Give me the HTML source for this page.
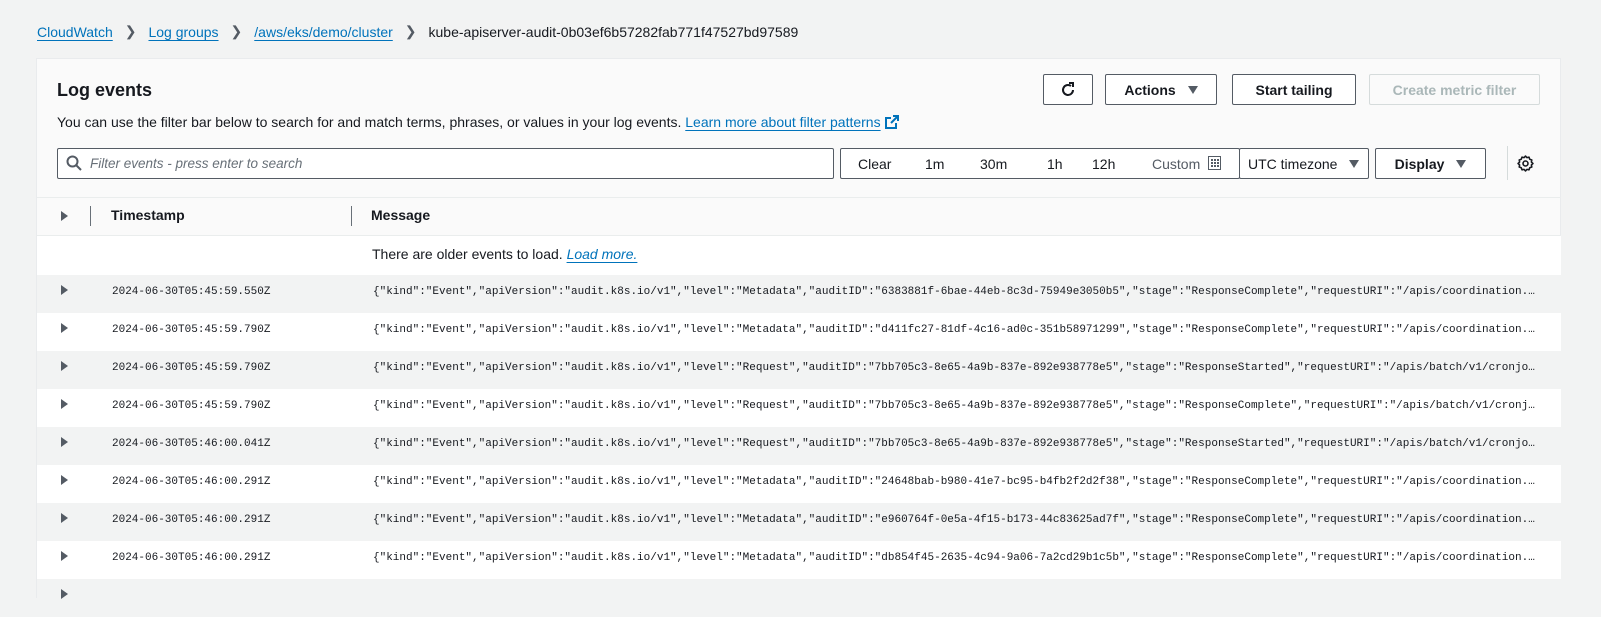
<!DOCTYPE html>
<html><head><meta charset="utf-8"><style>
*{box-sizing:border-box;margin:0;padding:0}
body{width:1601px;height:591px;overflow:hidden;background:#f2f3f3;font-family:"Liberation Sans",sans-serif;color:#16191f;position:relative;font-size:14px}
.a{position:absolute}
.lnk{color:#0073bb;text-decoration:underline;text-underline-offset:3px}
.bc{top:23px;left:37px;font-size:14px;white-space:nowrap;display:flex;align-items:center}
.bc .sep{margin:0 12px;color:#545b64}
.panel{left:36px;top:58px;width:1525px;height:540px;background:#fafafa;border:1px solid #e9ebed}
.btn{position:absolute;top:74px;height:31px;border:1px solid #545b64;border-radius:2px;background:#fff;font-weight:bold;font-size:14px;display:flex;align-items:center;justify-content:center;color:#16191f}
.tri{display:inline-block;width:0;height:0;border-left:5px solid transparent;border-right:5px solid transparent;border-top:8px solid #545b64;margin-left:12px}
.row{position:absolute;left:37px;width:1524px;height:38px}
.ts{position:absolute;left:75px;top:11px;font-family:"Liberation Mono",monospace;font-size:11px}
.msg{position:absolute;left:336px;top:11px;width:1163px;font-family:"Liberation Mono",monospace;font-size:11px;white-space:nowrap;overflow:hidden;text-overflow:ellipsis}
.ex{position:absolute;left:24px;top:10px;width:0;height:0;border-top:5px solid transparent;border-bottom:5px solid transparent;border-left:7px solid #545b64}
</style></head><body>
<div class="a bc"><span class="lnk">CloudWatch</span><span class="sep">&#x276F;</span><span class="lnk">Log groups</span><span class="sep">&#x276F;</span><span class="lnk">/aws/eks/demo/cluster</span><span class="sep">&#x276F;</span><span>kube-apiserver-audit-0b03ef6b57282fab771f47527bd97589</span></div>
<div class="a panel"></div>
<div class="a" style="left:57px;top:80px;font-size:18px;font-weight:bold">Log events</div>
<div class="a" style="left:57px;top:114px;font-size:14px;white-space:nowrap">You can use the filter bar below to search for and match terms, phrases, or values in your log events. <span class="lnk">Learn more about filter patterns</span> <svg width="14" height="14" viewBox="0 0 14 14" style="vertical-align:-2px"><path d="M8 1h5v5M13 1L6 8M11 8v5H1V3h5" fill="none" stroke="#0073bb" stroke-width="2"/></svg></div>
<div class="btn" style="left:1043px;width:50px"><svg width="18" height="18" viewBox="0 0 18 18"><path d="M14 9a5 5 0 1 1-2-4" fill="none" stroke="#16191f" stroke-width="2"/><path d="M10 2h4v4" fill="none" stroke="#16191f" stroke-width="2"/></svg></div>
<div class="btn" style="left:1105px;width:112px">Actions<span class="tri"></span></div>
<div class="btn" style="left:1232px;width:124px">Start tailing</div>
<div class="btn" style="left:1369px;width:171px;border-color:#d5dbdb;color:#aab7b8;background:#fafafa">Create metric filter</div>
<div class="a" style="left:57px;top:148px;width:777px;height:31px;border:1px solid #545b64;border-radius:2px;background:#fff"></div>
<svg class="a" style="left:66px;top:155px" width="16" height="16" viewBox="0 0 16 16"><circle cx="6.5" cy="6.5" r="5" fill="none" stroke="#545b64" stroke-width="2"/><path d="M10 10l5 5" stroke="#545b64" stroke-width="2"/></svg>
<div class="a" style="left:90px;top:156px;font-style:italic;color:#687078;font-size:13.5px">Filter events - press enter to search</div>
<div class="a" style="left:840px;top:148px;width:400px;height:31px;border:1px solid #545b64;border-radius:2px;background:#fff"></div>
<div class="a" style="left:858px;top:156px">Clear</div>
<div class="a" style="left:925px;top:156px">1m</div>
<div class="a" style="left:980px;top:156px">30m</div>
<div class="a" style="left:1047px;top:156px">1h</div>
<div class="a" style="left:1092px;top:156px">12h</div>
<div class="a" style="left:1152px;top:156px;color:#545b64">Custom</div>
<svg class="a" style="left:1208px;top:156px" width="13" height="14" viewBox="0 0 13 14"><rect x="0.5" y="0.5" width="12" height="13" fill="none" stroke="#545b64"/><g fill="#545b64"><rect x="3" y="3" width="2" height="2"/><rect x="6" y="3" width="2" height="2"/><rect x="9" y="3" width="2" height="2"/><rect x="3" y="6" width="2" height="2"/><rect x="6" y="6" width="2" height="2"/><rect x="9" y="6" width="2" height="2"/><rect x="3" y="9" width="2" height="2"/><rect x="6" y="9" width="2" height="2"/><rect x="9" y="9" width="2" height="2"/></g></svg>
<div class="a" style="left:1239px;top:148px;width:130px;height:31px;border:1px solid #545b64;border-radius:2px;background:#fff;display:flex;align-items:center;padding-left:8px">UTC timezone<span class="tri"></span></div>
<div class="btn" style="left:1375px;top:148px;width:111px">Display<span class="tri"></span></div>
<div class="a" style="left:1507px;top:146px;width:1px;height:34px;background:#d5dbdb"></div>
<svg class="a" style="left:1517px;top:155px" width="17" height="17" viewBox="0 0 24 24"><path d="M12 1.5l2 2.2 3-.6 1 2.9 2.9 1-.6 3 2.2 2-2.2 2 .6 3-2.9 1-1 2.9-3-.6-2 2.2-2-2.2-3 .6-1-2.9-2.9-1 .6-3L1.5 12l2.2-2-.6-3 2.9-1 1-2.9 3 .6z" fill="none" stroke="#16191f" stroke-width="2.2" stroke-linejoin="round"/><circle cx="12" cy="12" r="3.5" fill="none" stroke="#16191f" stroke-width="2.2"/></svg>
<div class="a" style="left:37px;top:197px;width:1524px;height:1px;background:#eaeded"></div>
<div class="a" style="left:61px;top:211px;width:0;height:0;border-top:5px solid transparent;border-bottom:5px solid transparent;border-left:7px solid #545b64"></div>
<div class="a" style="left:90px;top:206px;width:1px;height:20px;background:#687078"></div>
<div class="a" style="left:111px;top:207px;font-weight:bold">Timestamp</div>
<div class="a" style="left:351px;top:206px;width:1px;height:20px;background:#687078"></div>
<div class="a" style="left:371px;top:207px;font-weight:bold">Message</div>
<div class="a" style="left:37px;top:235px;width:1524px;height:40px;background:#fff;border-top:1px solid #eaeded"></div>
<div class="a" style="left:372px;top:246px">There are older events to load. <span class="lnk" style="font-style:italic">Load more.</span></div>

<div class="row" style="top:275px;background:#f2f3f3"><span class="ex"></span><span class="ts">2024-06-30T05:45:59.550Z</span><span class="msg">{"kind":"Event","apiVersion":"audit.k8s.io/v1","level":"Metadata","auditID":"6383881f-6bae-44eb-8c3d-75949e3050b5","stage":"ResponseComplete","requestURI":"/apis/coordination.k8s.io/v1</span></div>
<div class="row" style="top:313px;background:#fff"><span class="ex"></span><span class="ts">2024-06-30T05:45:59.790Z</span><span class="msg">{"kind":"Event","apiVersion":"audit.k8s.io/v1","level":"Metadata","auditID":"d411fc27-81df-4c16-ad0c-351b58971299","stage":"ResponseComplete","requestURI":"/apis/coordination.k8s.io/v1</span></div>
<div class="row" style="top:351px;background:#f2f3f3"><span class="ex"></span><span class="ts">2024-06-30T05:45:59.790Z</span><span class="msg">{"kind":"Event","apiVersion":"audit.k8s.io/v1","level":"Request","auditID":"7bb705c3-8e65-4a9b-837e-892e938778e5","stage":"ResponseStarted","requestURI":"/apis/batch/v1/cronjobs</span></div>
<div class="row" style="top:389px;background:#fff"><span class="ex"></span><span class="ts">2024-06-30T05:45:59.790Z</span><span class="msg">{"kind":"Event","apiVersion":"audit.k8s.io/v1","level":"Request","auditID":"7bb705c3-8e65-4a9b-837e-892e938778e5","stage":"ResponseComplete","requestURI":"/apis/batch/v1/cronjobs</span></div>
<div class="row" style="top:427px;background:#f2f3f3"><span class="ex"></span><span class="ts">2024-06-30T05:46:00.041Z</span><span class="msg">{"kind":"Event","apiVersion":"audit.k8s.io/v1","level":"Request","auditID":"7bb705c3-8e65-4a9b-837e-892e938778e5","stage":"ResponseStarted","requestURI":"/apis/batch/v1/cronjobs</span></div>
<div class="row" style="top:465px;background:#fff"><span class="ex"></span><span class="ts">2024-06-30T05:46:00.291Z</span><span class="msg">{"kind":"Event","apiVersion":"audit.k8s.io/v1","level":"Metadata","auditID":"24648bab-b980-41e7-bc95-b4fb2f2d2f38","stage":"ResponseComplete","requestURI":"/apis/coordination.k8s.io/v1</span></div>
<div class="row" style="top:503px;background:#f2f3f3"><span class="ex"></span><span class="ts">2024-06-30T05:46:00.291Z</span><span class="msg">{"kind":"Event","apiVersion":"audit.k8s.io/v1","level":"Metadata","auditID":"e960764f-0e5a-4f15-b173-44c83625ad7f","stage":"ResponseComplete","requestURI":"/apis/coordination.k8s.io/v1</span></div>
<div class="row" style="top:541px;background:#fff"><span class="ex"></span><span class="ts">2024-06-30T05:46:00.291Z</span><span class="msg">{"kind":"Event","apiVersion":"audit.k8s.io/v1","level":"Metadata","auditID":"db854f45-2635-4c94-9a06-7a2cd29b1c5b","stage":"ResponseComplete","requestURI":"/apis/coordination.k8s.io/v1</span></div>
<div class="row" style="top:579px;background:#f2f3f3"><span class="ex"></span></div>
</body></html>
